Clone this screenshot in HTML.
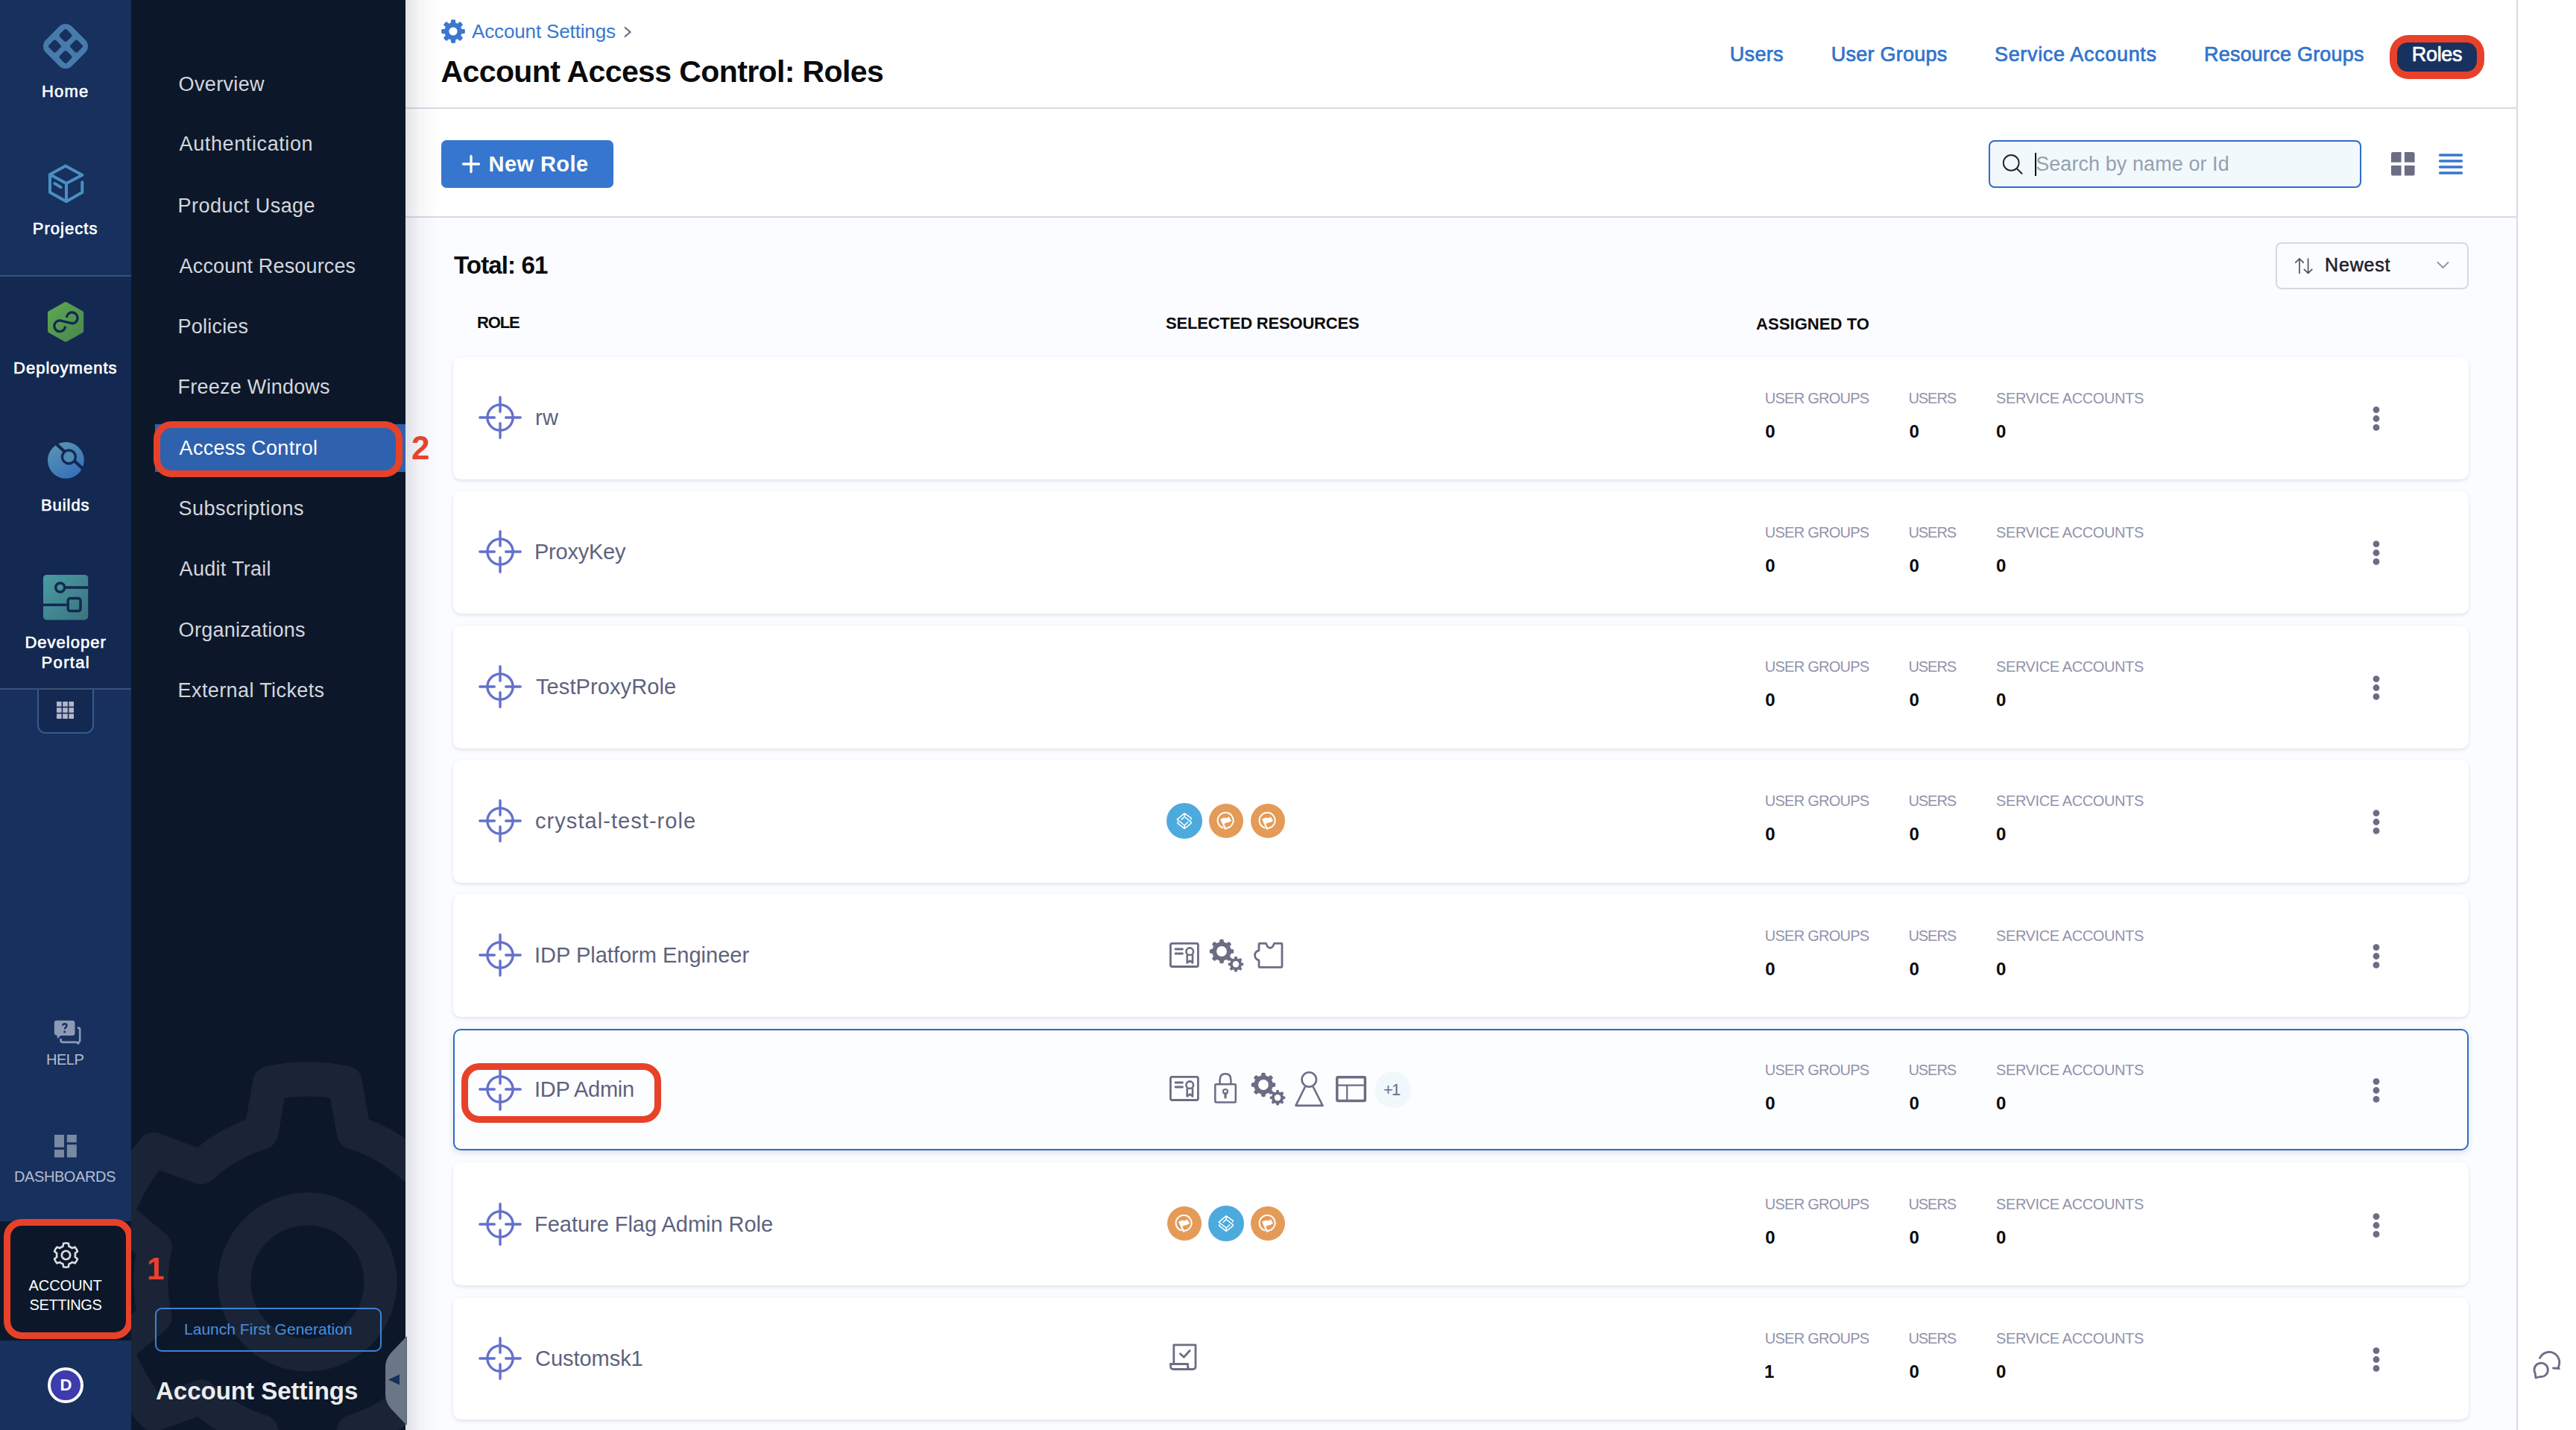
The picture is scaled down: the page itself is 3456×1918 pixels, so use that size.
<!DOCTYPE html><html><head><meta charset="utf-8"><title>Account Access Control: Roles</title><style>
*{margin:0;padding:0;box-sizing:border-box}
html,body{width:3456px;height:1918px;overflow:hidden;background:#FAFCFF;font-family:'Liberation Sans',sans-serif}
.t{position:absolute;white-space:nowrap;line-height:1;font-family:'Liberation Sans',sans-serif}
.a{position:absolute}
svg{position:absolute;overflow:visible}
</style></head><body>
<div class="a" style="left:0;top:0;width:176px;height:1918px;background:#17305E"></div>
<div class="a" style="left:0;top:371px;width:176px;height:553px;background:#132951"></div>
<div class="a" style="left:0;top:369px;width:176px;height:2px;background:#3B5175"></div>
<div class="a" style="left:0;top:923px;width:176px;height:2px;background:#3B5175"></div>
<div class="a" style="left:50px;top:925px;width:76px;height:59px;background:#132951;border:2px solid #365A8C;border-top:none;border-radius:0 0 11px 11px"></div>
<svg style="left:76px;top:941px" width="24" height="24"><rect x="0.0" y="0.0" width="6.6" height="6.6" fill="#B5B7CD"/><rect x="8.2" y="0.0" width="6.6" height="6.6" fill="#B5B7CD"/><rect x="16.4" y="0.0" width="6.6" height="6.6" fill="#B5B7CD"/><rect x="0.0" y="8.2" width="6.6" height="6.6" fill="#B5B7CD"/><rect x="8.2" y="8.2" width="6.6" height="6.6" fill="#B5B7CD"/><rect x="16.4" y="8.2" width="6.6" height="6.6" fill="#B5B7CD"/><rect x="0.0" y="16.4" width="6.6" height="6.6" fill="#B5B7CD"/><rect x="8.2" y="16.4" width="6.6" height="6.6" fill="#B5B7CD"/><rect x="16.4" y="16.4" width="6.6" height="6.6" fill="#B5B7CD"/></svg>
<div class="a" style="left:0;top:1638px;width:176px;height:160px;background:#0C1829"></div>
<svg style="left:58px;top:32px" width="60" height="60" viewBox="0 0 60 60"><g transform="rotate(45 30 30)"><rect x="5.3" y="5.3" width="49.4" height="49.4" rx="12" fill="#477BAC"/><rect x="13" y="13" width="13.5" height="13.5" rx="3" fill="#17305E"/><rect x="33.5" y="13" width="13.5" height="13.5" rx="3" fill="#17305E"/><rect x="13" y="33.5" width="13.5" height="13.5" rx="3" fill="#17305E"/><rect x="33.5" y="33.5" width="13.5" height="13.5" rx="3" fill="#17305E"/></g></svg>
<svg style="left:64.7px;top:219.8px" width="48" height="53" viewBox="0 0 48 53"><path d="M2,13.9 L22.9,2.4 L45.3,14.7 L24,26 Z M2,13.9 L2,37.9 L24,50.2 L24,26 M24,50.2 L45.3,37.9 L45.3,24.2 M8.4,26 L16.6,31.1" fill="none" stroke="#4A8FC3" stroke-width="4" stroke-linecap="round" stroke-linejoin="round"/></svg>
<svg style="left:63.9px;top:405.2px" width="48" height="54" viewBox="0 0 48 54"><defs><linearGradient id="gd" x1="0" y1="0" x2="1" y2="1"><stop offset="0" stop-color="#5CA653"/><stop offset="1" stop-color="#4A884E"/></linearGradient></defs><path d="M24.1,2.6 L45.6,14.5 L45.6,39 L24.1,51 L2.6,39 L2.6,14.5 Z" fill="url(#gd)" stroke="url(#gd)" stroke-width="5.2" stroke-linejoin="round"/><path d="M25.3,20.8 A7.4,7.4 0 1 1 33,28.8 L16.5,24.9 A7.4,7.4 0 1 0 23.6,32.6" fill="none" stroke="#132951" stroke-width="3.3"/></svg>
<svg style="left:63.7px;top:592.5px" width="50" height="50" viewBox="0 0 50 50"><defs><linearGradient id="gb" x1="0.2" y1="0" x2="0.8" y2="1"><stop offset="0" stop-color="#5A94B2"/><stop offset="1" stop-color="#336FBC"/></linearGradient></defs><circle cx="24.4" cy="24.4" r="24.4" fill="url(#gb)"/><line x1="9" y1="0" x2="50" y2="38.5" stroke="#132951" stroke-width="4.4"/><circle cx="28.4" cy="19.8" r="10.6" fill="#132951"/><circle cx="28.4" cy="19.8" r="7.3" fill="#5089B4"/></svg>
<svg style="left:57.8px;top:770.6px" width="61" height="61" viewBox="0 0 61 61"><defs><linearGradient id="gp" x1="0" y1="0" x2="1" y2="1"><stop offset="0" stop-color="#4A9BA3"/><stop offset="1" stop-color="#3A7480"/></linearGradient></defs><rect x="0" y="0" width="60.2" height="60.4" rx="4.5" fill="url(#gp)"/><circle cx="22.7" cy="17.1" r="6" fill="none" stroke="#132951" stroke-width="3.5"/><line x1="28.5" y1="17.1" x2="60.2" y2="17.1" stroke="#132951" stroke-width="3.5"/><rect x="33.2" y="31.5" width="16.8" height="17.1" rx="3" fill="none" stroke="#132951" stroke-width="3.5"/><line x1="0" y1="40.3" x2="31.6" y2="40.3" stroke="#132951" stroke-width="3.5"/></svg>
<svg style="left:72px;top:1368px" width="38" height="34" viewBox="0 0 38 34"><path d="M3.5,0.8 H25 Q28.5,0.8 28.5,4.3 V17.5 Q28.5,21 25,21 H9.5 L4.7,25.2 V21 Q0.8,20.5 0.8,17 V4.3 Q0.8,0.8 3.5,0.8 Z" fill="#8D9AB5"/><path d="M12.1,7.6 Q12.5,5.2 14.9,5.2 Q17.5,5.2 17.5,7.6 Q17.5,9.2 15.8,10.2 Q14.8,10.9 14.8,12.6" fill="none" stroke="#17305E" stroke-width="2.4"/><circle cx="14.7" cy="15.9" r="1.5" fill="#17305E"/><path d="M31.8,10.6 H33 Q35.2,10.6 35.2,12.8 V27.6 Q35.2,29.8 33.2,29.9 V31.8 L30.5,29.9 H12 Q9.5,29.9 9.5,26.8 V25" fill="none" stroke="#8D9AB5" stroke-width="2.6" stroke-linejoin="round"/></svg>
<svg style="left:72.6px;top:1521.6px" width="31" height="31" viewBox="0 0 31 31"><rect x="0" y="0" width="13" height="16.8" fill="#7988A3"/><rect x="0" y="20" width="13" height="10.4" fill="#7988A3"/><rect x="16.8" y="0" width="13" height="10.2" fill="#7988A3"/><rect x="16.8" y="13.2" width="13" height="17.2" fill="#7988A3"/></svg>
<svg style="left:71px;top:1665px" width="36" height="38" viewBox="0 0 36 38"><path d="M13.43,6.68 L14.13,2.65 A16.2,16.2 0 0 1 20.87,2.65 L21.57,6.68 A12.5,12.5 0 0 1 25.70,9.07 L29.54,7.66 A16.2,16.2 0 0 1 32.91,13.49 L29.77,16.11 A12.5,12.5 0 0 1 29.77,20.89 L32.91,23.51 A16.2,16.2 0 0 1 29.54,29.34 L25.70,27.93 A12.5,12.5 0 0 1 21.57,30.32 L20.87,34.35 A16.2,16.2 0 0 1 14.13,34.35 L13.43,30.32 A12.5,12.5 0 0 1 9.30,27.93 L5.46,29.34 A16.2,16.2 0 0 1 2.09,23.51 L5.23,20.89 A12.5,12.5 0 0 1 5.23,16.11 L2.09,13.49 A16.2,16.2 0 0 1 5.46,7.66 L9.30,9.07 A12.5,12.5 0 0 1 13.43,6.68 Z" fill="none" stroke="#DCDDE0" stroke-width="2.6" stroke-linejoin="round"/><circle cx="17.5" cy="18.5" r="5.7" fill="none" stroke="#DCDDE0" stroke-width="2.6"/></svg>
<div class="a" style="left:5px;top:1635px;width:173px;height:161px;border:9.5px solid #E8412A;border-radius:24px"></div>
<div class="a" style="left:64px;top:1834px;width:48px;height:48px;border-radius:50%;background:#3D3BAE;border:4px solid #FFFFFF"></div>
<span class="t" style="left:80.5px;top:1847px;font-size:22px;font-weight:700;color:#FFFFFF">D</span>
<div class="a" style="left:176px;top:0;width:368px;height:1918px;background:#0C1829;overflow:hidden"><svg style="left:0;top:0" width="368" height="1918"><g transform="translate(-176 0)"><path d="M350.40,1518.89 L362.00,1452.23 A272,272 0 0 1 463.00,1452.23 L474.60,1518.89 A210,210 0 0 1 555.18,1565.42 L618.71,1542.13 A272,272 0 0 1 669.21,1629.60 L617.28,1672.97 A210,210 0 0 1 617.28,1766.03 L669.21,1809.40 A272,272 0 0 1 618.71,1896.87 L555.18,1873.58 A210,210 0 0 1 474.60,1920.11 L463.00,1986.77 A272,272 0 0 1 362.00,1986.77 L350.40,1920.11 A210,210 0 0 1 269.82,1873.58 L206.29,1896.87 A272,272 0 0 1 155.79,1809.40 L207.72,1766.03 A210,210 0 0 1 207.72,1672.97 L155.79,1629.60 A272,272 0 0 1 206.29,1542.13 L269.82,1565.42 A210,210 0 0 1 350.40,1518.89 Z" fill="none" stroke="#1A2436" stroke-width="46" stroke-linejoin="round"/><circle cx="412.5" cy="1719.5" r="98" fill="none" stroke="#1A2436" stroke-width="44"/></g></svg></div>
<div class="a" style="left:208px;top:569px;width:336px;height:64px;background:#2E62AE"></div>
<div class="a" style="left:206px;top:565px;width:334px;height:75px;border:9.5px solid #E8412A;border-radius:24px"></div>
<div class="a" style="left:208px;top:1754px;width:304px;height:59px;border:2.5px solid #3C82D8;border-radius:9px"></div>
<svg style="left:514px;top:1792px" width="32" height="120" viewBox="0 0 32 120"><path d="M32,0 L11,22 Q3,31 3,42 V78 Q3,89 11,98 L32,120 Z" fill="#6B7786"/><path d="M7,58.5 L22,51.5 V65.5 Z" fill="#13305E"/></svg>
<div class="a" style="left:544px;top:0;width:2834px;height:145px;background:#FFFFFF"></div>
<div class="a" style="left:544px;top:144px;width:2834px;height:2px;background:#D9DAE5"></div>
<div class="a" style="left:544px;top:146px;width:2834px;height:144px;background:#FFFFFF"></div>
<div class="a" style="left:544px;top:290px;width:2834px;height:2px;background:#D9DAE5"></div>
<div class="a" style="left:3376px;top:0;width:2px;height:1918px;background:#D9DAE5"></div>
<div class="a" style="left:3378px;top:0;width:78px;height:1918px;background:#FFFFFF"></div>
<svg style="left:592px;top:26px" width="32" height="32" viewBox="0 0 32 32"><path d="M13.29,5.13 L13.62,0.99 A15.2,15.2 0 0 1 18.38,0.99 L18.71,5.13 A11.2,11.2 0 0 1 21.77,6.40 L24.93,3.70 A15.2,15.2 0 0 1 28.30,7.07 L25.60,10.23 A11.2,11.2 0 0 1 26.87,13.29 L31.01,13.62 A15.2,15.2 0 0 1 31.01,18.38 L26.87,18.71 A11.2,11.2 0 0 1 25.60,21.77 L28.30,24.93 A15.2,15.2 0 0 1 24.93,28.30 L21.77,25.60 A11.2,11.2 0 0 1 18.71,26.87 L18.38,31.01 A15.2,15.2 0 0 1 13.62,31.01 L13.29,26.87 A11.2,11.2 0 0 1 10.23,25.60 L7.07,28.30 A15.2,15.2 0 0 1 3.70,24.93 L6.40,21.77 A11.2,11.2 0 0 1 5.13,18.71 L0.99,18.38 A15.2,15.2 0 0 1 0.99,13.62 L5.13,13.29 A11.2,11.2 0 0 1 6.40,10.23 L3.70,7.07 A15.2,15.2 0 0 1 7.07,3.70 L10.23,6.40 A11.2,11.2 0 0 1 13.29,5.13 Z" fill="#3A78D0" stroke="#3A78D0" stroke-width="1.2" stroke-linejoin="round"/><circle cx="16" cy="16" r="5.6" fill="#FFFFFF"/></svg>
<svg style="left:836px;top:35px" width="12" height="16" viewBox="0 0 12 16"><path d="M2,1.5 L9.5,8 L2,14.5" fill="none" stroke="#6B6D85" stroke-width="2.2"/></svg>
<div class="a" style="left:3206px;top:47px;width:127px;height:59px;border-radius:25px;background:#E8412A"></div>
<div class="a" style="left:3216px;top:57px;width:107px;height:39px;border-radius:14px;background:#17325F"></div>
<div class="a" style="left:592px;top:188px;width:231px;height:64px;border-radius:7px;background:#3776CE"></div>
<svg style="left:620px;top:208px" width="24" height="24" viewBox="0 0 24 24"><path d="M12,1.5 V22.5 M1.5,12 H22.5" stroke="#FFFFFF" stroke-width="3.3" stroke-linecap="round"/></svg>
<div class="a" style="left:2668px;top:188px;width:500px;height:64px;border-radius:8px;background:#F1F9FD;border:2.2px solid #2F6CC9"></div>
<svg style="left:2684px;top:205px" width="30" height="30" viewBox="0 0 30 30"><circle cx="14.2" cy="13.4" r="10.4" fill="none" stroke="#22222A" stroke-width="1.9"/><path d="M21.6,21 L28.6,27.8" stroke="#22222A" stroke-width="1.9" stroke-linecap="round"/></svg>
<div class="a" style="left:2730px;top:205px;width:2px;height:31px;background:#0B0B0D"></div>
<svg style="left:3208.2px;top:204.1px" width="32" height="32" viewBox="0 0 32 32"><rect x="0" y="0" width="31.6" height="31.6" rx="2.6" fill="#6B6D85"/><rect x="13.6" y="-1" width="4.3" height="34" fill="#FFFFFF"/><rect x="-1" y="13.7" width="34" height="4.3" fill="#FFFFFF"/></svg>
<svg style="left:3272px;top:206px" width="32" height="28" viewBox="0 0 32 28"><path d="M1.5,2 H30.5 M1.5,10 H30.5 M1.5,18 H30.5 M1.5,26 H30.5" stroke="#3776CE" stroke-width="3.3" stroke-linecap="round"/></svg>
<div class="a" style="left:544px;top:0;width:44px;height:1918px;background:linear-gradient(to right,rgba(40,40,70,0.13),rgba(40,40,70,0.04) 45%,rgba(40,40,70,0))"></div>
<div class="a" style="left:3052.5px;top:324.5px;width:259px;height:63px;border-radius:8px;background:#FBFCFF;border:2px solid #D6D7E2"></div>
<svg style="left:3079px;top:346px" width="26" height="22" viewBox="0 0 26 22"><path d="M6,20.5 V1 M0.8,6.2 L6,1 L11.2,6.2 M17.6,1 V20.5 M12.4,15.3 L17.6,20.5 L22.8,15.3" fill="none" stroke="#4F5162" stroke-width="1.7" stroke-linecap="round" stroke-linejoin="round"/></svg>
<svg style="left:3269px;top:350px" width="18" height="12" viewBox="0 0 18 12"><path d="M1,1.5 L8.5,9 L16,1.5" fill="none" stroke="#8E90A8" stroke-width="1.9"/></svg>
<div class="a" style="left:608px;top:478.80px;width:2704px;height:164.5px;border-radius:10px;background:#FFFFFF;box-shadow:0 0 1px rgba(40,41,61,0.06),0 2px 4px rgba(96,97,112,0.16)"></div>
<svg style="left:642px;top:531.0px" width="58" height="58" viewBox="0 0 58 58"><circle cx="29" cy="29" r="17.1" fill="none" stroke="#6470CC" stroke-width="3.4"/><path d="M29,1.8 V21.3 M29,36.7 V56.2 M1.8,29 H21.3 M36.7,29 H56.2" stroke="#6470CC" stroke-width="3.4" stroke-linecap="round"/></svg>
<svg style="left:3182px;top:545.0px" width="12" height="33" viewBox="0 0 12 33"><circle cx="6" cy="4.6" r="4.4" fill="#6B6D85"/><circle cx="6" cy="16.5" r="4.4" fill="#6B6D85"/><circle cx="6" cy="28.4" r="4.4" fill="#6B6D85"/></svg>
<div class="a" style="left:608px;top:658.90px;width:2704px;height:164.5px;border-radius:10px;background:#FFFFFF;box-shadow:0 0 1px rgba(40,41,61,0.06),0 2px 4px rgba(96,97,112,0.16)"></div>
<svg style="left:642px;top:711.25px" width="58" height="58" viewBox="0 0 58 58"><circle cx="29" cy="29" r="17.1" fill="none" stroke="#6470CC" stroke-width="3.4"/><path d="M29,1.8 V21.3 M29,36.7 V56.2 M1.8,29 H21.3 M36.7,29 H56.2" stroke="#6470CC" stroke-width="3.4" stroke-linecap="round"/></svg>
<svg style="left:3182px;top:725.25px" width="12" height="33" viewBox="0 0 12 33"><circle cx="6" cy="4.6" r="4.4" fill="#6B6D85"/><circle cx="6" cy="16.5" r="4.4" fill="#6B6D85"/><circle cx="6" cy="28.4" r="4.4" fill="#6B6D85"/></svg>
<div class="a" style="left:608px;top:839.00px;width:2704px;height:164.5px;border-radius:10px;background:#FFFFFF;box-shadow:0 0 1px rgba(40,41,61,0.06),0 2px 4px rgba(96,97,112,0.16)"></div>
<svg style="left:642px;top:891.5px" width="58" height="58" viewBox="0 0 58 58"><circle cx="29" cy="29" r="17.1" fill="none" stroke="#6470CC" stroke-width="3.4"/><path d="M29,1.8 V21.3 M29,36.7 V56.2 M1.8,29 H21.3 M36.7,29 H56.2" stroke="#6470CC" stroke-width="3.4" stroke-linecap="round"/></svg>
<svg style="left:3182px;top:905.5px" width="12" height="33" viewBox="0 0 12 33"><circle cx="6" cy="4.6" r="4.4" fill="#6B6D85"/><circle cx="6" cy="16.5" r="4.4" fill="#6B6D85"/><circle cx="6" cy="28.4" r="4.4" fill="#6B6D85"/></svg>
<div class="a" style="left:608px;top:1019.10px;width:2704px;height:164.5px;border-radius:10px;background:#FFFFFF;box-shadow:0 0 1px rgba(40,41,61,0.06),0 2px 4px rgba(96,97,112,0.16)"></div>
<svg style="left:642px;top:1071.75px" width="58" height="58" viewBox="0 0 58 58"><circle cx="29" cy="29" r="17.1" fill="none" stroke="#6470CC" stroke-width="3.4"/><path d="M29,1.8 V21.3 M29,36.7 V56.2 M1.8,29 H21.3 M36.7,29 H56.2" stroke="#6470CC" stroke-width="3.4" stroke-linecap="round"/></svg>
<svg style="left:3182px;top:1085.75px" width="12" height="33" viewBox="0 0 12 33"><circle cx="6" cy="4.6" r="4.4" fill="#6B6D85"/><circle cx="6" cy="16.5" r="4.4" fill="#6B6D85"/><circle cx="6" cy="28.4" r="4.4" fill="#6B6D85"/></svg>
<div class="a" style="left:608px;top:1199.20px;width:2704px;height:164.5px;border-radius:10px;background:#FFFFFF;box-shadow:0 0 1px rgba(40,41,61,0.06),0 2px 4px rgba(96,97,112,0.16)"></div>
<svg style="left:642px;top:1252.0px" width="58" height="58" viewBox="0 0 58 58"><circle cx="29" cy="29" r="17.1" fill="none" stroke="#6470CC" stroke-width="3.4"/><path d="M29,1.8 V21.3 M29,36.7 V56.2 M1.8,29 H21.3 M36.7,29 H56.2" stroke="#6470CC" stroke-width="3.4" stroke-linecap="round"/></svg>
<svg style="left:3182px;top:1266.0px" width="12" height="33" viewBox="0 0 12 33"><circle cx="6" cy="4.6" r="4.4" fill="#6B6D85"/><circle cx="6" cy="16.5" r="4.4" fill="#6B6D85"/><circle cx="6" cy="28.4" r="4.4" fill="#6B6D85"/></svg>
<div class="a" style="left:608px;top:1380px;width:2704px;height:163px;border-radius:10px;background:#FCFDFF;border:2.5px solid #2F6CC9;box-shadow:0 3px 9px rgba(20,30,60,0.13)"></div>
<svg style="left:642px;top:1432.25px" width="58" height="58" viewBox="0 0 58 58"><circle cx="29" cy="29" r="17.1" fill="none" stroke="#6470CC" stroke-width="3.4"/><path d="M29,1.8 V21.3 M29,36.7 V56.2 M1.8,29 H21.3 M36.7,29 H56.2" stroke="#6470CC" stroke-width="3.4" stroke-linecap="round"/></svg>
<svg style="left:3182px;top:1446.25px" width="12" height="33" viewBox="0 0 12 33"><circle cx="6" cy="4.6" r="4.4" fill="#6B6D85"/><circle cx="6" cy="16.5" r="4.4" fill="#6B6D85"/><circle cx="6" cy="28.4" r="4.4" fill="#6B6D85"/></svg>
<div class="a" style="left:608px;top:1559.40px;width:2704px;height:164.5px;border-radius:10px;background:#FFFFFF;box-shadow:0 0 1px rgba(40,41,61,0.06),0 2px 4px rgba(96,97,112,0.16)"></div>
<svg style="left:642px;top:1612.5px" width="58" height="58" viewBox="0 0 58 58"><circle cx="29" cy="29" r="17.1" fill="none" stroke="#6470CC" stroke-width="3.4"/><path d="M29,1.8 V21.3 M29,36.7 V56.2 M1.8,29 H21.3 M36.7,29 H56.2" stroke="#6470CC" stroke-width="3.4" stroke-linecap="round"/></svg>
<svg style="left:3182px;top:1626.5px" width="12" height="33" viewBox="0 0 12 33"><circle cx="6" cy="4.6" r="4.4" fill="#6B6D85"/><circle cx="6" cy="16.5" r="4.4" fill="#6B6D85"/><circle cx="6" cy="28.4" r="4.4" fill="#6B6D85"/></svg>
<div class="a" style="left:608px;top:1739.50px;width:2704px;height:164.5px;border-radius:10px;background:#FFFFFF;box-shadow:0 0 1px rgba(40,41,61,0.06),0 2px 4px rgba(96,97,112,0.16)"></div>
<svg style="left:642px;top:1792.75px" width="58" height="58" viewBox="0 0 58 58"><circle cx="29" cy="29" r="17.1" fill="none" stroke="#6470CC" stroke-width="3.4"/><path d="M29,1.8 V21.3 M29,36.7 V56.2 M1.8,29 H21.3 M36.7,29 H56.2" stroke="#6470CC" stroke-width="3.4" stroke-linecap="round"/></svg>
<svg style="left:3182px;top:1806.75px" width="12" height="33" viewBox="0 0 12 33"><circle cx="6" cy="4.6" r="4.4" fill="#6B6D85"/><circle cx="6" cy="16.5" r="4.4" fill="#6B6D85"/><circle cx="6" cy="28.4" r="4.4" fill="#6B6D85"/></svg>
<div class="a" style="left:619px;top:1425.5px;width:268px;height:80px;border:9.5px solid #E8412A;border-radius:24px"></div>
<svg style="left:1564.6px;top:1077.25px" width="48" height="48" viewBox="0 0 48 48"><circle cx="24" cy="24" r="24" fill="#4DAADD"/><path d="M33,22.1 V20.1 L24.1,13.9 L14.2,22.1 L24.1,30 L28.7,25.7 M20.1,22.1 L24.1,18.5 L33.1,25.6 V27.1 L24.1,34.3 L14.9,27.1 V25.4 M24.1,13.9 V18.5 M24.1,30 V34.3" fill="none" stroke="#FFFFFF" stroke-width="1.5" stroke-linejoin="round" stroke-linecap="round"/></svg>
<svg style="left:1622px;top:1078.45px" width="46" height="46" viewBox="0 0 46 46"><circle cx="23" cy="23" r="23" fill="#E49B57"/><path d="M19.38,32.54 A10.5,10.5 0 1 1 22.72,32.88" fill="none" stroke="#FFFFFF" stroke-width="2"/><path d="M15.5,20.8 L20.1,19.1 L24.1,19.5 L26.7,17.8 L29.7,22.8 L26.1,24.8 L22.1,25.4 L20.1,27.4 L23.1,34 L21.5,34.7 Z" fill="#FFFFFF" stroke="#FFFFFF" stroke-width="0.6" stroke-linejoin="round"/><path d="M17.8,22.5 L22,31.5" stroke="#E49B57" stroke-width="0"/></svg>
<svg style="left:1678px;top:1078.45px" width="46" height="46" viewBox="0 0 46 46"><circle cx="23" cy="23" r="23" fill="#E49B57"/><path d="M19.38,32.54 A10.5,10.5 0 1 1 22.72,32.88" fill="none" stroke="#FFFFFF" stroke-width="2"/><path d="M15.5,20.8 L20.1,19.1 L24.1,19.5 L26.7,17.8 L29.7,22.8 L26.1,24.8 L22.1,25.4 L20.1,27.4 L23.1,34 L21.5,34.7 Z" fill="#FFFFFF" stroke="#FFFFFF" stroke-width="0.6" stroke-linejoin="round"/><path d="M17.8,22.5 L22,31.5" stroke="#E49B57" stroke-width="0"/></svg>
<svg style="left:1566px;top:1618.0px" width="46" height="46" viewBox="0 0 46 46"><circle cx="23" cy="23" r="23" fill="#E49B57"/><path d="M19.38,32.54 A10.5,10.5 0 1 1 22.72,32.88" fill="none" stroke="#FFFFFF" stroke-width="2"/><path d="M15.5,20.8 L20.1,19.1 L24.1,19.5 L26.7,17.8 L29.7,22.8 L26.1,24.8 L22.1,25.4 L20.1,27.4 L23.1,34 L21.5,34.7 Z" fill="#FFFFFF" stroke="#FFFFFF" stroke-width="0.6" stroke-linejoin="round"/><path d="M17.8,22.5 L22,31.5" stroke="#E49B57" stroke-width="0"/></svg>
<svg style="left:1621px;top:1617.3px" width="48" height="48" viewBox="0 0 48 48"><circle cx="24" cy="24" r="24" fill="#4DAADD"/><path d="M33,22.1 V20.1 L24.1,13.9 L14.2,22.1 L24.1,30 L28.7,25.7 M20.1,22.1 L24.1,18.5 L33.1,25.6 V27.1 L24.1,34.3 L14.9,27.1 V25.4 M24.1,13.9 V18.5 M24.1,30 V34.3" fill="none" stroke="#FFFFFF" stroke-width="1.5" stroke-linejoin="round" stroke-linecap="round"/></svg>
<svg style="left:1678px;top:1618.0px" width="46" height="46" viewBox="0 0 46 46"><circle cx="23" cy="23" r="23" fill="#E49B57"/><path d="M19.38,32.54 A10.5,10.5 0 1 1 22.72,32.88" fill="none" stroke="#FFFFFF" stroke-width="2"/><path d="M15.5,20.8 L20.1,19.1 L24.1,19.5 L26.7,17.8 L29.7,22.8 L26.1,24.8 L22.1,25.4 L20.1,27.4 L23.1,34 L21.5,34.7 Z" fill="#FFFFFF" stroke="#FFFFFF" stroke-width="0.6" stroke-linejoin="round"/><path d="M17.8,22.5 L22,31.5" stroke="#E49B57" stroke-width="0"/></svg>
<svg style="left:1568.5px;top:1263.5px" width="41" height="35" viewBox="0 0 41 35"><rect x="1.4" y="1.4" width="37" height="31.1" rx="2" fill="none" stroke="#6B6D85" stroke-width="2.8"/><path d="M8,9 H17.5 M8,15 H17.5" stroke="#6B6D85" stroke-width="2.8" stroke-linecap="round"/><circle cx="27.2" cy="12.2" r="4.8" fill="none" stroke="#6B6D85" stroke-width="2.6"/><path d="M23.7,16.5 V27.5 L27.5,24.6 L31,27.5 V16.5" fill="none" stroke="#6B6D85" stroke-width="2.6" stroke-linejoin="round"/></svg>
<svg style="left:1623px;top:1259.5px" width="46" height="45" viewBox="0 0 46 45"><path d="M13.46,4.07 L14.10,0.52 A15.6,15.6 0 0 1 17.90,0.52 L18.54,4.07 A12.2,12.2 0 0 1 22.64,5.77 L25.60,3.71 A15.6,15.6 0 0 1 28.29,6.40 L26.23,9.36 A12.2,12.2 0 0 1 27.93,13.46 L31.48,14.10 A15.6,15.6 0 0 1 31.48,17.90 L27.93,18.54 A12.2,12.2 0 0 1 26.23,22.64 L28.29,25.60 A15.6,15.6 0 0 1 25.60,28.29 L22.64,26.23 A12.2,12.2 0 0 1 18.54,27.93 L17.90,31.48 A15.6,15.6 0 0 1 14.10,31.48 L13.46,27.93 A12.2,12.2 0 0 1 9.36,26.23 L6.40,28.29 A15.6,15.6 0 0 1 3.71,25.60 L5.77,22.64 A12.2,12.2 0 0 1 4.07,18.54 L0.52,17.90 A15.6,15.6 0 0 1 0.52,14.10 L4.07,13.46 A12.2,12.2 0 0 1 5.77,9.36 L3.71,6.40 A15.6,15.6 0 0 1 6.40,3.71 L9.36,5.77 A12.2,12.2 0 0 1 13.46,4.07 Z" fill="#6B6D85" stroke="#6B6D85" stroke-width="1.2" stroke-linejoin="round"/><circle cx="16" cy="16" r="6.9" fill="#FFFFFF"/><path d="M33.46,26.06 L33.82,23.67 A9.7,9.7 0 0 1 36.18,23.67 L36.54,26.06 A7.4,7.4 0 0 1 39.03,27.09 L40.97,25.66 A9.7,9.7 0 0 1 42.64,27.33 L41.21,29.27 A7.4,7.4 0 0 1 42.24,31.76 L44.63,32.12 A9.7,9.7 0 0 1 44.63,34.48 L42.24,34.84 A7.4,7.4 0 0 1 41.21,37.33 L42.64,39.27 A9.7,9.7 0 0 1 40.97,40.94 L39.03,39.51 A7.4,7.4 0 0 1 36.54,40.54 L36.18,42.93 A9.7,9.7 0 0 1 33.82,42.93 L33.46,40.54 A7.4,7.4 0 0 1 30.97,39.51 L29.03,40.94 A9.7,9.7 0 0 1 27.36,39.27 L28.79,37.33 A7.4,7.4 0 0 1 27.76,34.84 L25.37,34.48 A9.7,9.7 0 0 1 25.37,32.12 L27.76,31.76 A7.4,7.4 0 0 1 28.79,29.27 L27.36,27.33 A9.7,9.7 0 0 1 29.03,25.66 L30.97,27.09 A7.4,7.4 0 0 1 33.46,26.06 Z" fill="#6B6D85" stroke="#6B6D85" stroke-width="1.2" stroke-linejoin="round"/><circle cx="35" cy="33.3" r="4.2" fill="#FFFFFF"/></svg>
<svg style="left:1682px;top:1264.0px" width="40" height="35" viewBox="0 0 40 35"><path d="M7,10.8 V2.4 Q7,1.4 8,1.4 H16.5 Q18.5,7.5 22,7.5 Q25.5,7.5 27.5,1.4 H37 Q38,1.4 38,2.4 V32.3 Q38,33.3 37,33.3 H8 Q7,33.3 7,32.3 V24 Q1.6,22.5 1.6,17.3 Q1.6,12.2 7,10.8 Z" fill="none" stroke="#6B6D85" stroke-width="2.8" stroke-linejoin="round"/></svg>
<svg style="left:1568.5px;top:1443.25px" width="41" height="35" viewBox="0 0 41 35"><rect x="1.4" y="1.4" width="37" height="31.1" rx="2" fill="none" stroke="#6B6D85" stroke-width="2.8"/><path d="M8,9 H17.5 M8,15 H17.5" stroke="#6B6D85" stroke-width="2.8" stroke-linecap="round"/><circle cx="27.2" cy="12.2" r="4.8" fill="none" stroke="#6B6D85" stroke-width="2.6"/><path d="M23.7,16.5 V27.5 L27.5,24.6 L31,27.5 V16.5" fill="none" stroke="#6B6D85" stroke-width="2.6" stroke-linejoin="round"/></svg>
<svg style="left:1629px;top:1438.75px" width="32" height="41" viewBox="0 0 32 41"><rect x="1.3" y="15.3" width="27.5" height="24.3" rx="1.5" fill="none" stroke="#6B6D85" stroke-width="2.5"/><path d="M7.6,15.3 V9.5 Q7.6,1.3 15,1.3 Q22.4,1.3 22.4,9.5 V15.3" fill="none" stroke="#6B6D85" stroke-width="2.5"/><circle cx="15" cy="25" r="3" fill="none" stroke="#6B6D85" stroke-width="2.2"/><path d="M15,27.5 V33" stroke="#6B6D85" stroke-width="3.2" stroke-linecap="round"/></svg>
<svg style="left:1679px;top:1439.25px" width="46" height="45" viewBox="0 0 46 45"><path d="M13.46,4.07 L14.10,0.52 A15.6,15.6 0 0 1 17.90,0.52 L18.54,4.07 A12.2,12.2 0 0 1 22.64,5.77 L25.60,3.71 A15.6,15.6 0 0 1 28.29,6.40 L26.23,9.36 A12.2,12.2 0 0 1 27.93,13.46 L31.48,14.10 A15.6,15.6 0 0 1 31.48,17.90 L27.93,18.54 A12.2,12.2 0 0 1 26.23,22.64 L28.29,25.60 A15.6,15.6 0 0 1 25.60,28.29 L22.64,26.23 A12.2,12.2 0 0 1 18.54,27.93 L17.90,31.48 A15.6,15.6 0 0 1 14.10,31.48 L13.46,27.93 A12.2,12.2 0 0 1 9.36,26.23 L6.40,28.29 A15.6,15.6 0 0 1 3.71,25.60 L5.77,22.64 A12.2,12.2 0 0 1 4.07,18.54 L0.52,17.90 A15.6,15.6 0 0 1 0.52,14.10 L4.07,13.46 A12.2,12.2 0 0 1 5.77,9.36 L3.71,6.40 A15.6,15.6 0 0 1 6.40,3.71 L9.36,5.77 A12.2,12.2 0 0 1 13.46,4.07 Z" fill="#6B6D85" stroke="#6B6D85" stroke-width="1.2" stroke-linejoin="round"/><circle cx="16" cy="16" r="6.9" fill="#FFFFFF"/><path d="M33.46,26.06 L33.82,23.67 A9.7,9.7 0 0 1 36.18,23.67 L36.54,26.06 A7.4,7.4 0 0 1 39.03,27.09 L40.97,25.66 A9.7,9.7 0 0 1 42.64,27.33 L41.21,29.27 A7.4,7.4 0 0 1 42.24,31.76 L44.63,32.12 A9.7,9.7 0 0 1 44.63,34.48 L42.24,34.84 A7.4,7.4 0 0 1 41.21,37.33 L42.64,39.27 A9.7,9.7 0 0 1 40.97,40.94 L39.03,39.51 A7.4,7.4 0 0 1 36.54,40.54 L36.18,42.93 A9.7,9.7 0 0 1 33.82,42.93 L33.46,40.54 A7.4,7.4 0 0 1 30.97,39.51 L29.03,40.94 A9.7,9.7 0 0 1 27.36,39.27 L28.79,37.33 A7.4,7.4 0 0 1 27.76,34.84 L25.37,34.48 A9.7,9.7 0 0 1 25.37,32.12 L27.76,31.76 A7.4,7.4 0 0 1 28.79,29.27 L27.36,27.33 A9.7,9.7 0 0 1 29.03,25.66 L30.97,27.09 A7.4,7.4 0 0 1 33.46,26.06 Z" fill="#6B6D85" stroke="#6B6D85" stroke-width="1.2" stroke-linejoin="round"/><circle cx="35" cy="33.3" r="4.2" fill="#FFFFFF"/></svg>
<svg style="left:1737px;top:1436.75px" width="40" height="48" viewBox="0 0 40 48"><circle cx="19.3" cy="11" r="9.7" fill="none" stroke="#6B6D85" stroke-width="2.6"/><path d="M14,20.5 L1.5,45.9 H37.5 L24.6,20.5" fill="none" stroke="#6B6D85" stroke-width="2.6" stroke-linejoin="round"/></svg>
<svg style="left:1792px;top:1442.55px" width="42" height="36" viewBox="0 0 42 36"><rect x="1.8" y="1.8" width="37.6" height="31.7" rx="1.5" fill="none" stroke="#6B6D85" stroke-width="3.5"/><path d="M2,12.6 H39 M15.2,12.6 V33" stroke="#6B6D85" stroke-width="2.2"/></svg>
<div class="a" style="left:1844.7px;top:1437.3px;width:48.4px;height:48.4px;border-radius:50%;background:#F0F8FC"></div>
<svg style="left:1569px;top:1801.5px" width="37" height="37" viewBox="0 0 37 37"><path d="M5.8,27.5 V1.8 H35 V30.5 Q35,34.5 31,34.5 H26.5" fill="none" stroke="#6B6D85" stroke-width="2.8" stroke-linejoin="round"/><path d="M1.5,27.5 H24.5 V30.5 Q24.5,34.5 28.5,34.5 H5.5 Q1.5,34.5 1.5,30.5 Z" fill="none" stroke="#6B6D85" stroke-width="2.8" stroke-linejoin="round"/><path d="M14.5,13.8 L19.3,18.2 L27.2,9.5" fill="none" stroke="#6B6D85" stroke-width="2.8" stroke-linejoin="round" stroke-linecap="round"/></svg>
<svg style="left:3399px;top:1807px" width="40" height="42" viewBox="0 0 40 42"><path d="M8.5,14.5 A10.5,10.5 0 1 1 33.5,26 L34,28.5 L26.5,28" fill="none" stroke="#6B6D85" stroke-width="2.8" stroke-linecap="round"/><path d="M3,41 L2.2,35 A9.2,9.2 0 1 1 9,39.5 Z" fill="none" stroke="#6B6D85" stroke-width="2.8" stroke-linejoin="round"/></svg>
<span class="t" style="left:56.00px;top:112.37px;font-size:22px;font-weight:400;color:#FFFFFF;letter-spacing:1.184px;-webkit-text-stroke:0.65px #FFFFFF;">Home</span>
<span class="t" style="left:43.80px;top:295.67px;font-size:22px;font-weight:400;color:#FFFFFF;letter-spacing:1.018px;-webkit-text-stroke:0.65px #FFFFFF;">Projects</span>
<span class="t" style="left:18.00px;top:482.67px;font-size:22px;font-weight:400;color:#FFFFFF;letter-spacing:1.011px;-webkit-text-stroke:0.65px #FFFFFF;">Deployments</span>
<span class="t" style="left:55.00px;top:666.97px;font-size:22px;font-weight:400;color:#FFFFFF;letter-spacing:0.936px;-webkit-text-stroke:0.65px #FFFFFF;">Builds</span>
<span class="t" style="left:33.40px;top:850.87px;font-size:22px;font-weight:400;color:#FFFFFF;letter-spacing:1.006px;-webkit-text-stroke:0.65px #FFFFFF;">Developer</span>
<span class="t" style="left:55.60px;top:878.17px;font-size:22px;font-weight:400;color:#FFFFFF;letter-spacing:1.323px;-webkit-text-stroke:0.65px #FFFFFF;">Portal</span>
<span class="t" style="left:62.00px;top:1411.07px;font-size:20px;font-weight:400;color:#B3BDD0;letter-spacing:-0.469px;">HELP</span>
<span class="t" style="left:19.00px;top:1567.67px;font-size:20px;font-weight:400;color:#B3BDD0;letter-spacing:-0.410px;">DASHBOARDS</span>
<span class="t" style="left:38.60px;top:1714.07px;font-size:20px;font-weight:400;color:#FFFFFF;letter-spacing:-0.112px;">ACCOUNT</span>
<span class="t" style="left:39.50px;top:1739.77px;font-size:20px;font-weight:400;color:#FFFFFF;letter-spacing:-0.381px;">SETTINGS</span>
<span class="t" style="left:239.60px;top:99.54px;font-size:27px;font-weight:400;color:#D3D6DE;letter-spacing:0.340px;">Overview</span>
<span class="t" style="left:240.60px;top:180.34px;font-size:27px;font-weight:400;color:#D3D6DE;letter-spacing:0.607px;">Authentication</span>
<span class="t" style="left:238.60px;top:263.14px;font-size:27px;font-weight:400;color:#D3D6DE;letter-spacing:0.451px;">Product Usage</span>
<span class="t" style="left:240.60px;top:343.54px;font-size:27px;font-weight:400;color:#D3D6DE;letter-spacing:0.149px;">Account Resources</span>
<span class="t" style="left:238.60px;top:425.14px;font-size:27px;font-weight:400;color:#D3D6DE;letter-spacing:0.209px;">Policies</span>
<span class="t" style="left:238.60px;top:505.94px;font-size:27px;font-weight:400;color:#D3D6DE;letter-spacing:0.226px;">Freeze Windows</span>
<span class="t" style="left:240.60px;top:587.84px;font-size:27px;font-weight:400;color:#FFFFFF;letter-spacing:0.303px;">Access Control</span>
<span class="t" style="left:239.60px;top:668.74px;font-size:27px;font-weight:400;color:#D3D6DE;letter-spacing:0.493px;">Subscriptions</span>
<span class="t" style="left:240.60px;top:749.74px;font-size:27px;font-weight:400;color:#D3D6DE;letter-spacing:0.296px;">Audit Trail</span>
<span class="t" style="left:239.60px;top:832.14px;font-size:27px;font-weight:400;color:#D3D6DE;letter-spacing:0.284px;">Organizations</span>
<span class="t" style="left:238.60px;top:913.14px;font-size:27px;font-weight:400;color:#D3D6DE;letter-spacing:0.396px;">External Tickets</span>
<span class="t" style="left:247.00px;top:1772.22px;font-size:21px;font-weight:400;color:#4A8FE0;letter-spacing:0.018px;">Launch First Generation</span>
<span class="t" style="left:209.00px;top:1849.06px;font-size:33px;font-weight:700;color:#ECEDF0;letter-spacing:0.000px;">Account Settings</span>
<span class="t" style="left:197.00px;top:1681.44px;font-size:42px;font-weight:700;color:#E8432E;letter-spacing:0.000px;">1</span>
<span class="t" style="left:552.00px;top:578.75px;font-size:44px;font-weight:700;color:#E8432E;letter-spacing:0.000px;">2</span>
<span class="t" style="left:633.00px;top:28.69px;font-size:26px;font-weight:400;color:#3A78D0;letter-spacing:-0.141px;">Account Settings</span>
<span class="t" style="left:591.50px;top:75.89px;font-size:41px;font-weight:700;color:#0B0B0D;letter-spacing:-0.608px;">Account Access Control: Roles</span>
<span class="t" style="left:2320.70px;top:60.04px;font-size:27px;font-weight:400;color:#3173CC;letter-spacing:0.349px;-webkit-text-stroke:0.7px #3173CC;">Users</span>
<span class="t" style="left:2456.80px;top:60.04px;font-size:27px;font-weight:400;color:#3173CC;letter-spacing:0.245px;-webkit-text-stroke:0.7px #3173CC;">User Groups</span>
<span class="t" style="left:2676.00px;top:60.04px;font-size:27px;font-weight:400;color:#3173CC;letter-spacing:0.661px;-webkit-text-stroke:0.7px #3173CC;">Service Accounts</span>
<span class="t" style="left:2957.00px;top:60.04px;font-size:27px;font-weight:400;color:#3173CC;letter-spacing:0.207px;-webkit-text-stroke:0.7px #3173CC;">Resource Groups</span>
<span class="t" style="left:3235.80px;top:60.44px;font-size:27px;font-weight:400;color:#FFFFFF;letter-spacing:-0.332px;-webkit-text-stroke:0.7px #FFFFFF;">Roles</span>
<span class="t" style="left:655.50px;top:206.15px;font-size:29px;font-weight:700;color:#FFFFFF;letter-spacing:0.443px;">New Role</span>
<span class="t" style="left:2731.20px;top:207.04px;font-size:27px;font-weight:400;color:#97A0AD;letter-spacing:0.073px;">Search by name or Id</span>
<span class="t" style="left:609.00px;top:338.96px;font-size:33px;font-weight:700;color:#0B0B0D;letter-spacing:-0.861px;">Total: 61</span>
<span class="t" style="left:640.00px;top:422.27px;font-size:22px;font-weight:700;color:#0B0B0D;letter-spacing:-1.146px;">ROLE</span>
<span class="t" style="left:1564.00px;top:422.87px;font-size:22px;font-weight:700;color:#0B0B0D;letter-spacing:-0.185px;">SELECTED RESOURCES</span>
<span class="t" style="left:2356.00px;top:423.97px;font-size:22px;font-weight:700;color:#0B0B0D;letter-spacing:0.074px;">ASSIGNED TO</span>
<span class="t" style="left:3119.00px;top:343.03px;font-size:25px;font-weight:400;color:#1F2028;letter-spacing:0.837px;-webkit-text-stroke:0.55px #1F2028;">Newest</span>
<span class="t" style="left:718.00px;top:546.05px;font-size:29px;font-weight:400;color:#5E627D;letter-spacing:0.343px;">rw</span>
<span class="t" style="left:2367.80px;top:523.62px;font-size:20px;font-weight:400;color:#9293AB;letter-spacing:-0.746px;">USER GROUPS</span>
<span class="t" style="left:2560.40px;top:523.62px;font-size:20px;font-weight:400;color:#9293AB;letter-spacing:-1.042px;">USERS</span>
<span class="t" style="left:2678.00px;top:523.62px;font-size:20px;font-weight:400;color:#9293AB;letter-spacing:-0.392px;">SERVICE ACCOUNTS</span>
<span class="t" style="left:2368.30px;top:566.68px;font-size:24px;font-weight:700;color:#0B0B0D;letter-spacing:0.000px;">0</span>
<span class="t" style="left:2561.40px;top:566.68px;font-size:24px;font-weight:700;color:#0B0B0D;letter-spacing:0.000px;">0</span>
<span class="t" style="left:2678.00px;top:566.68px;font-size:24px;font-weight:700;color:#0B0B0D;letter-spacing:0.000px;">0</span>
<span class="t" style="left:717.00px;top:726.30px;font-size:29px;font-weight:400;color:#5E627D;letter-spacing:-0.229px;">ProxyKey</span>
<span class="t" style="left:2367.80px;top:703.87px;font-size:20px;font-weight:400;color:#9293AB;letter-spacing:-0.746px;">USER GROUPS</span>
<span class="t" style="left:2560.40px;top:703.87px;font-size:20px;font-weight:400;color:#9293AB;letter-spacing:-1.042px;">USERS</span>
<span class="t" style="left:2678.00px;top:703.87px;font-size:20px;font-weight:400;color:#9293AB;letter-spacing:-0.392px;">SERVICE ACCOUNTS</span>
<span class="t" style="left:2368.30px;top:746.93px;font-size:24px;font-weight:700;color:#0B0B0D;letter-spacing:0.000px;">0</span>
<span class="t" style="left:2561.40px;top:746.93px;font-size:24px;font-weight:700;color:#0B0B0D;letter-spacing:0.000px;">0</span>
<span class="t" style="left:2678.00px;top:746.93px;font-size:24px;font-weight:700;color:#0B0B0D;letter-spacing:0.000px;">0</span>
<span class="t" style="left:719.00px;top:906.55px;font-size:29px;font-weight:400;color:#5E627D;letter-spacing:0.098px;">TestProxyRole</span>
<span class="t" style="left:2367.80px;top:884.12px;font-size:20px;font-weight:400;color:#9293AB;letter-spacing:-0.746px;">USER GROUPS</span>
<span class="t" style="left:2560.40px;top:884.12px;font-size:20px;font-weight:400;color:#9293AB;letter-spacing:-1.042px;">USERS</span>
<span class="t" style="left:2678.00px;top:884.12px;font-size:20px;font-weight:400;color:#9293AB;letter-spacing:-0.392px;">SERVICE ACCOUNTS</span>
<span class="t" style="left:2368.30px;top:927.18px;font-size:24px;font-weight:700;color:#0B0B0D;letter-spacing:0.000px;">0</span>
<span class="t" style="left:2561.40px;top:927.18px;font-size:24px;font-weight:700;color:#0B0B0D;letter-spacing:0.000px;">0</span>
<span class="t" style="left:2678.00px;top:927.18px;font-size:24px;font-weight:700;color:#0B0B0D;letter-spacing:0.000px;">0</span>
<span class="t" style="left:718.00px;top:1086.80px;font-size:29px;font-weight:400;color:#5E627D;letter-spacing:1.058px;">crystal-test-role</span>
<span class="t" style="left:2367.80px;top:1064.37px;font-size:20px;font-weight:400;color:#9293AB;letter-spacing:-0.746px;">USER GROUPS</span>
<span class="t" style="left:2560.40px;top:1064.37px;font-size:20px;font-weight:400;color:#9293AB;letter-spacing:-1.042px;">USERS</span>
<span class="t" style="left:2678.00px;top:1064.37px;font-size:20px;font-weight:400;color:#9293AB;letter-spacing:-0.392px;">SERVICE ACCOUNTS</span>
<span class="t" style="left:2368.30px;top:1107.43px;font-size:24px;font-weight:700;color:#0B0B0D;letter-spacing:0.000px;">0</span>
<span class="t" style="left:2561.40px;top:1107.43px;font-size:24px;font-weight:700;color:#0B0B0D;letter-spacing:0.000px;">0</span>
<span class="t" style="left:2678.00px;top:1107.43px;font-size:24px;font-weight:700;color:#0B0B0D;letter-spacing:0.000px;">0</span>
<span class="t" style="left:717.00px;top:1267.05px;font-size:29px;font-weight:400;color:#5E627D;letter-spacing:0.007px;">IDP Platform Engineer</span>
<span class="t" style="left:2367.80px;top:1244.62px;font-size:20px;font-weight:400;color:#9293AB;letter-spacing:-0.746px;">USER GROUPS</span>
<span class="t" style="left:2560.40px;top:1244.62px;font-size:20px;font-weight:400;color:#9293AB;letter-spacing:-1.042px;">USERS</span>
<span class="t" style="left:2678.00px;top:1244.62px;font-size:20px;font-weight:400;color:#9293AB;letter-spacing:-0.392px;">SERVICE ACCOUNTS</span>
<span class="t" style="left:2368.30px;top:1287.68px;font-size:24px;font-weight:700;color:#0B0B0D;letter-spacing:0.000px;">0</span>
<span class="t" style="left:2561.40px;top:1287.68px;font-size:24px;font-weight:700;color:#0B0B0D;letter-spacing:0.000px;">0</span>
<span class="t" style="left:2678.00px;top:1287.68px;font-size:24px;font-weight:700;color:#0B0B0D;letter-spacing:0.000px;">0</span>
<span class="t" style="left:717.00px;top:1447.30px;font-size:29px;font-weight:400;color:#5E627D;letter-spacing:-0.309px;">IDP Admin</span>
<span class="t" style="left:2367.80px;top:1424.87px;font-size:20px;font-weight:400;color:#9293AB;letter-spacing:-0.746px;">USER GROUPS</span>
<span class="t" style="left:2560.40px;top:1424.87px;font-size:20px;font-weight:400;color:#9293AB;letter-spacing:-1.042px;">USERS</span>
<span class="t" style="left:2678.00px;top:1424.87px;font-size:20px;font-weight:400;color:#9293AB;letter-spacing:-0.392px;">SERVICE ACCOUNTS</span>
<span class="t" style="left:2368.30px;top:1467.93px;font-size:24px;font-weight:700;color:#0B0B0D;letter-spacing:0.000px;">0</span>
<span class="t" style="left:2561.40px;top:1467.93px;font-size:24px;font-weight:700;color:#0B0B0D;letter-spacing:0.000px;">0</span>
<span class="t" style="left:2678.00px;top:1467.93px;font-size:24px;font-weight:700;color:#0B0B0D;letter-spacing:0.000px;">0</span>
<span class="t" style="left:717.00px;top:1627.55px;font-size:29px;font-weight:400;color:#5E627D;letter-spacing:-0.029px;">Feature Flag Admin Role</span>
<span class="t" style="left:2367.80px;top:1605.12px;font-size:20px;font-weight:400;color:#9293AB;letter-spacing:-0.746px;">USER GROUPS</span>
<span class="t" style="left:2560.40px;top:1605.12px;font-size:20px;font-weight:400;color:#9293AB;letter-spacing:-1.042px;">USERS</span>
<span class="t" style="left:2678.00px;top:1605.12px;font-size:20px;font-weight:400;color:#9293AB;letter-spacing:-0.392px;">SERVICE ACCOUNTS</span>
<span class="t" style="left:2368.30px;top:1648.18px;font-size:24px;font-weight:700;color:#0B0B0D;letter-spacing:0.000px;">0</span>
<span class="t" style="left:2561.40px;top:1648.18px;font-size:24px;font-weight:700;color:#0B0B0D;letter-spacing:0.000px;">0</span>
<span class="t" style="left:2678.00px;top:1648.18px;font-size:24px;font-weight:700;color:#0B0B0D;letter-spacing:0.000px;">0</span>
<span class="t" style="left:718.00px;top:1807.80px;font-size:29px;font-weight:400;color:#5E627D;letter-spacing:-0.039px;">Customsk1</span>
<span class="t" style="left:2367.80px;top:1785.37px;font-size:20px;font-weight:400;color:#9293AB;letter-spacing:-0.746px;">USER GROUPS</span>
<span class="t" style="left:2560.40px;top:1785.37px;font-size:20px;font-weight:400;color:#9293AB;letter-spacing:-1.042px;">USERS</span>
<span class="t" style="left:2678.00px;top:1785.37px;font-size:20px;font-weight:400;color:#9293AB;letter-spacing:-0.392px;">SERVICE ACCOUNTS</span>
<span class="t" style="left:2367.00px;top:1828.43px;font-size:24px;font-weight:700;color:#0B0B0D;letter-spacing:0.000px;">1</span>
<span class="t" style="left:2561.40px;top:1828.43px;font-size:24px;font-weight:700;color:#0B0B0D;letter-spacing:0.000px;">0</span>
<span class="t" style="left:2678.00px;top:1828.43px;font-size:24px;font-weight:700;color:#0B0B0D;letter-spacing:0.000px;">0</span>
<span class="t" style="left:1856.00px;top:1451.37px;font-size:22px;font-weight:400;color:#6B6D85;letter-spacing:-1.848px;">+1</span>
</body></html>
